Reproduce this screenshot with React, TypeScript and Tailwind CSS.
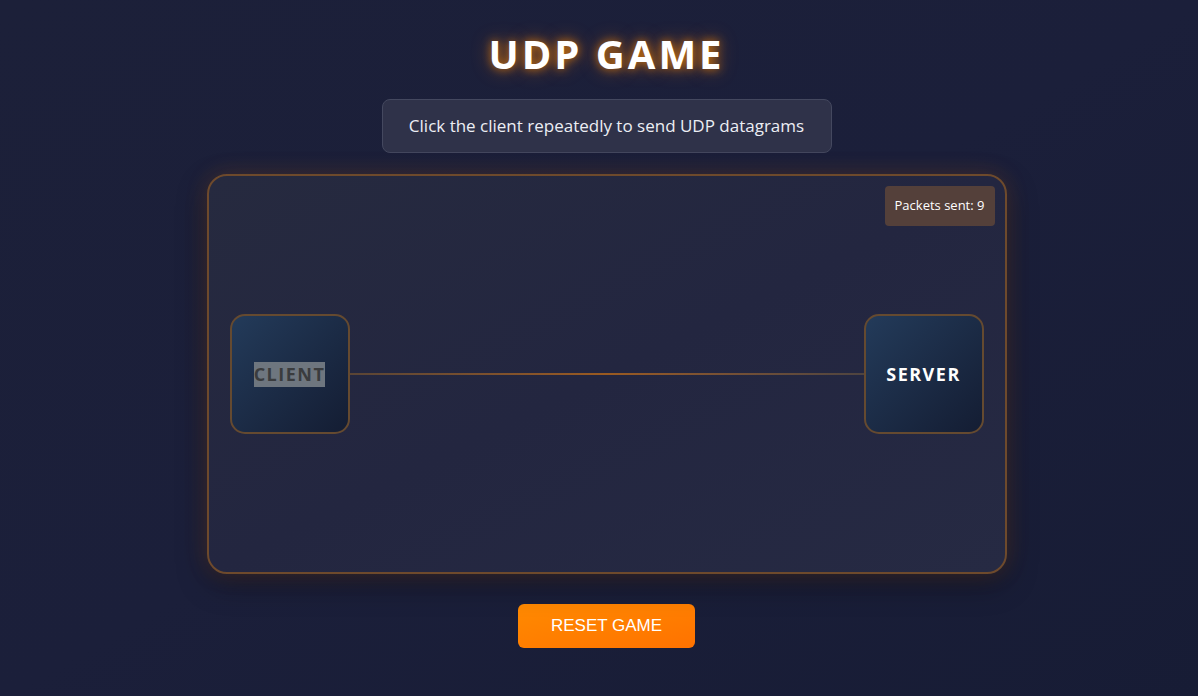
import { useState } from "react";

export default function App() {
  const [packets, setPackets] = useState(9);

  return (
    <div
      className="flex min-h-[696px] w-full flex-col items-center bg-gradient-to-br from-[#1c2039] via-[#1b1f3a] to-[#171c35] pl-[15px] pt-[27px]"
      style={{ fontFamily: '"Open Sans", "Noto Sans", sans-serif' }}
    >
      <h1
        className="text-[40px] font-bold leading-[54px] tracking-[3px] text-white"
        style={{ textShadow: "0 0 10px rgba(255,140,0,0.75), 0 0 20px rgba(255,120,0,0.45)" }}
      >
        UDP GAME
      </h1>

      <div className="mt-[18px] flex h-[54px] w-[450px] items-center justify-center rounded-lg border border-[#44485f] bg-[#2f3249] text-[17px] text-[#eceef4]">
        Click the client repeatedly to send UDP datagrams
      </div>

      <div className="relative mt-[21px] flex h-[400px] w-[800px] items-center rounded-[20px] border-2 border-[#6e4a2c] bg-gradient-to-br from-[#262a3f] via-[#232640] to-[#262a43] px-[21px] shadow-[0_0_22px_rgba(255,130,30,0.18),0_10px_30px_rgba(0,0,0,0.35)]">
        <div className="absolute right-[10px] top-[10px] flex h-[40px] items-center rounded-[4px] bg-[#54403a] px-[10px] text-[13px] text-white">
          Packets sent: {packets}
        </div>

        <button
          onClick={() => setPackets(packets + 1)}
          className="flex h-[120px] w-[120px] shrink-0 items-center justify-center rounded-[15px] border-2 border-[#654a30] bg-gradient-to-br from-[#233b5a] to-[#141d33]"
        >
          <span className="bg-[#6e767f] text-[18px] font-bold leading-[25px] tracking-[1.5px] text-[#3a3c3e]">
            CLIENT
          </span>
        </button>

        <div className="h-[2px] flex-1 bg-gradient-to-r from-[#5a4535] via-[#9a5a20] to-[#4e4440]" />

        <div className="flex h-[120px] w-[120px] shrink-0 items-center justify-center rounded-[15px] border-2 border-[#654a30] bg-gradient-to-br from-[#233b5a] to-[#141d33]">
          <span className="text-[18px] font-bold tracking-[1.5px] text-white">SERVER</span>
        </div>
      </div>

      <button
        onClick={() => setPackets(0)}
        className="mt-[30px] flex h-[44px] w-[177px] items-center justify-center rounded-[6px] bg-gradient-to-br from-[#ff8a00] to-[#ff7200] text-[17px] text-white"
        style={{ fontFamily: '"Liberation Sans", Arial, sans-serif' }}
      >
        RESET GAME
      </button>
    </div>
  );
}
